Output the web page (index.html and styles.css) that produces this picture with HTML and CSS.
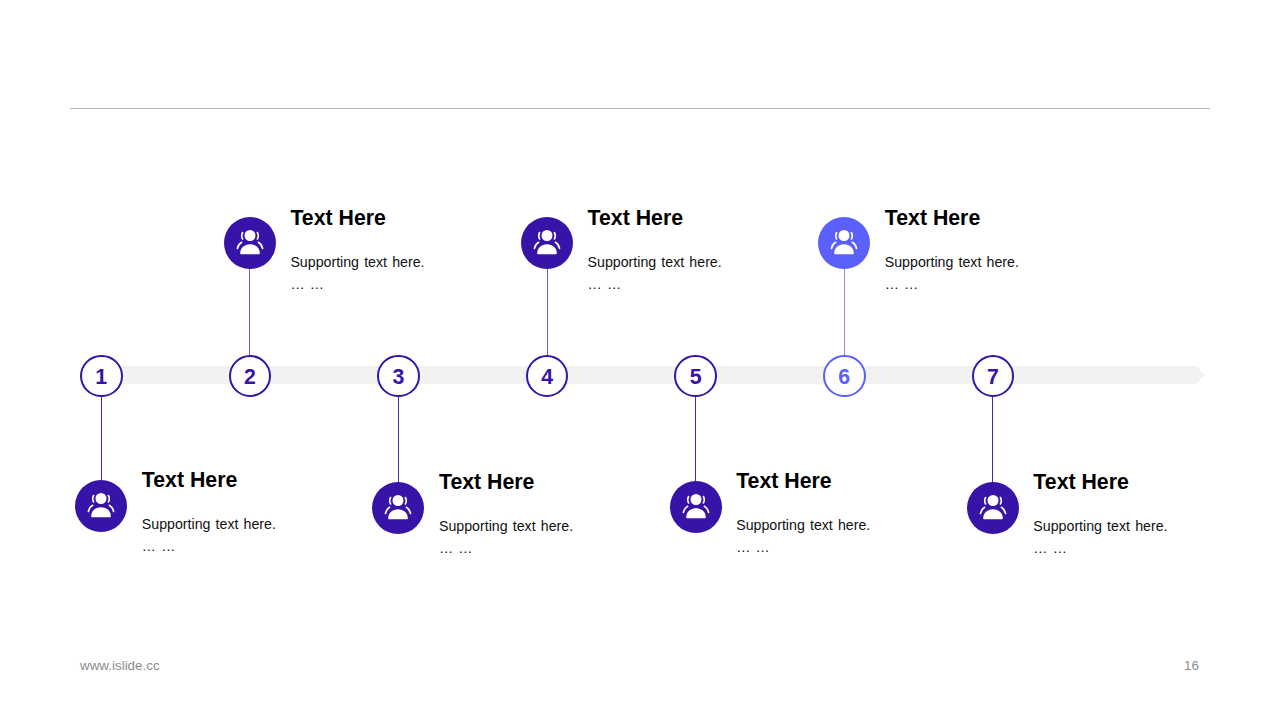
FILE: index.html
```html
<!DOCTYPE html>
<html lang="en">
<head>
<meta charset="utf-8">
<title>Timeline</title>
<link rel="stylesheet" href="styles.css">
</head>
<body>
<svg class="defs" width="0" height="0" aria-hidden="true">
  <symbol id="people" viewBox="0 0 52 52">
    <circle cx="26" cy="18.500" r="5.500" fill="#fff"/>
    <path d="M16.200 36.200c0-5.400 4.300-8.900 9.800-8.900s9.800 3.500 9.800 8.900c0 .6-.4 1-1 1H17.200c-.6 0-1-.4-1-1z" fill="#fff"/>
    <path d="M18.600 15.500c-1.200 2.200-1.200 4.300 0 6.500M33.400 15.500c1.200 2.200 1.200 4.300 0 6.500M13.400 31.500c.5-2.800 2-4.800 4.300-6.200M38.600 31.500c-.5-2.800-2-4.800-4.300-6.200" fill="none" stroke="#fff" stroke-width="1.600" stroke-linecap="round"/>
  </symbol>
</svg>
<main class="slide">
  <hr class="rule">
  <section class="timeline">
    <div class="arrow"></div>
    <div class="step">
      <div class="upper"></div>
      <div class="num">1</div>
      <div class="lower lower-a">
        <div class="stem"></div>
        <div class="card">
          <svg class="icon"><use href="#people"/></svg>
          <div class="copy"><h3>Text Here</h3><p>Supporting text here.</p><p>… …</p></div>
        </div>
      </div>
    </div>
    <div class="step">
      <div class="upper">
        <div class="card">
          <svg class="icon"><use href="#people"/></svg>
          <div class="copy"><h3>Text Here</h3><p>Supporting text here.</p><p>… …</p></div>
        </div>
        <div class="stem"></div>
      </div>
      <div class="num">2</div>
      <div class="lower"></div>
    </div>
    <div class="step">
      <div class="upper"></div>
      <div class="num">3</div>
      <div class="lower lower-c">
        <div class="stem"></div>
        <div class="card">
          <svg class="icon"><use href="#people"/></svg>
          <div class="copy"><h3>Text Here</h3><p>Supporting text here.</p><p>… …</p></div>
        </div>
      </div>
    </div>
    <div class="step">
      <div class="upper">
        <div class="card">
          <svg class="icon"><use href="#people"/></svg>
          <div class="copy"><h3>Text Here</h3><p>Supporting text here.</p><p>… …</p></div>
        </div>
        <div class="stem"></div>
      </div>
      <div class="num">4</div>
      <div class="lower"></div>
    </div>
    <div class="step">
      <div class="upper"></div>
      <div class="num">5</div>
      <div class="lower lower-b">
        <div class="stem"></div>
        <div class="card">
          <svg class="icon"><use href="#people"/></svg>
          <div class="copy"><h3>Text Here</h3><p>Supporting text here.</p><p>… …</p></div>
        </div>
      </div>
    </div>
    <div class="step accent">
      <div class="upper">
        <div class="card">
          <svg class="icon"><use href="#people"/></svg>
          <div class="copy"><h3>Text Here</h3><p>Supporting text here.</p><p>… …</p></div>
        </div>
        <div class="stem"></div>
      </div>
      <div class="num">6</div>
      <div class="lower"></div>
    </div>
    <div class="step">
      <div class="upper"></div>
      <div class="num">7</div>
      <div class="lower lower-c">
        <div class="stem"></div>
        <div class="card">
          <svg class="icon"><use href="#people"/></svg>
          <div class="copy"><h3>Text Here</h3><p>Supporting text here.</p><p>… …</p></div>
        </div>
      </div>
    </div>
  </section>
  <footer class="foot"><span>www.islide.cc</span><span>16</span></footer>
</main>
</body>
</html>
```
FILE: styles.css
```css
* { box-sizing: border-box; margin: 0; padding: 0; }
html, body { width: 1280px; height: 720px; overflow: hidden; background: #fff; }
body { font-family: "Liberation Sans", Arial, sans-serif; color: #000; }
.defs { position: absolute; }

.slide {
  --ink: #3713a8;
  width: 1280px;
  height: 720px;
  display: flex;
  flex-direction: column;
  padding-top: 108px;
}
.rule { height: 1px; border: 0; margin: 0 70px; background: #b3b3b3; flex: none; }

.timeline {
  position: relative;
  flex: none;
  display: grid;
  grid-template-columns: repeat(7, 148.6px);
  padding: 109px 0 0 27px;
  height: 534px;
}
.arrow {
  position: absolute;
  left: 101px;
  top: 257px;
  width: 1104px;
  height: 18px;
  background: #f2f2f2;
  clip-path: polygon(0 0, 1095px 0, 100% 50%, 1095px 100%, 0 100%);
}

.step {
  position: relative;
  display: grid;
  grid-template-rows: 136.500px 42.600px 1fr;
  justify-items: center;
}
.step.accent { --ink: #5b5ffb; }

.upper, .lower { display: flex; flex-direction: column; align-items: center; }
.upper { justify-content: flex-end; }

.num {
  width: 42.600px;
  height: 42.600px;
  border: 2px solid var(--ink);
  border-radius: 50%;
  background: #fff;
  color: var(--ink);
  font-size: 21.300px;
  font-weight: 700;
  line-height: 41px;
  text-align: center;
}

.stem { width: 1px; height: 85.500px; background: var(--ink); opacity: .7; flex: none; }
.lower .stem { height: 83px; opacity: .9; }
.lower-b .stem { height: 84px; }
.lower-c .stem { height: 85px; }

.card { display: flex; width: 52px; height: 52px; flex: none; }
.icon {
  flex: none;
  width: 52px;
  height: 52px;
  border-radius: 50%;
  background: var(--ink);
}
.copy { flex: none; width: 200px; margin: -12px 0 0 14.500px; }
.upper .copy { margin-top: -11px; }
.copy h3 { font-size: 21.300px; line-height: 25px; font-weight: 700; margin-bottom: 20px; }
.copy p { font-size: 14.200px; line-height: 22px; word-spacing: 1.200px; color: #111; }

.foot {
  display: flex;
  justify-content: space-between;
  margin: 16px 81px 0 80px;
  font-size: 13.400px;
  line-height: 14px;
  color: #8c8c8c;
}
```
